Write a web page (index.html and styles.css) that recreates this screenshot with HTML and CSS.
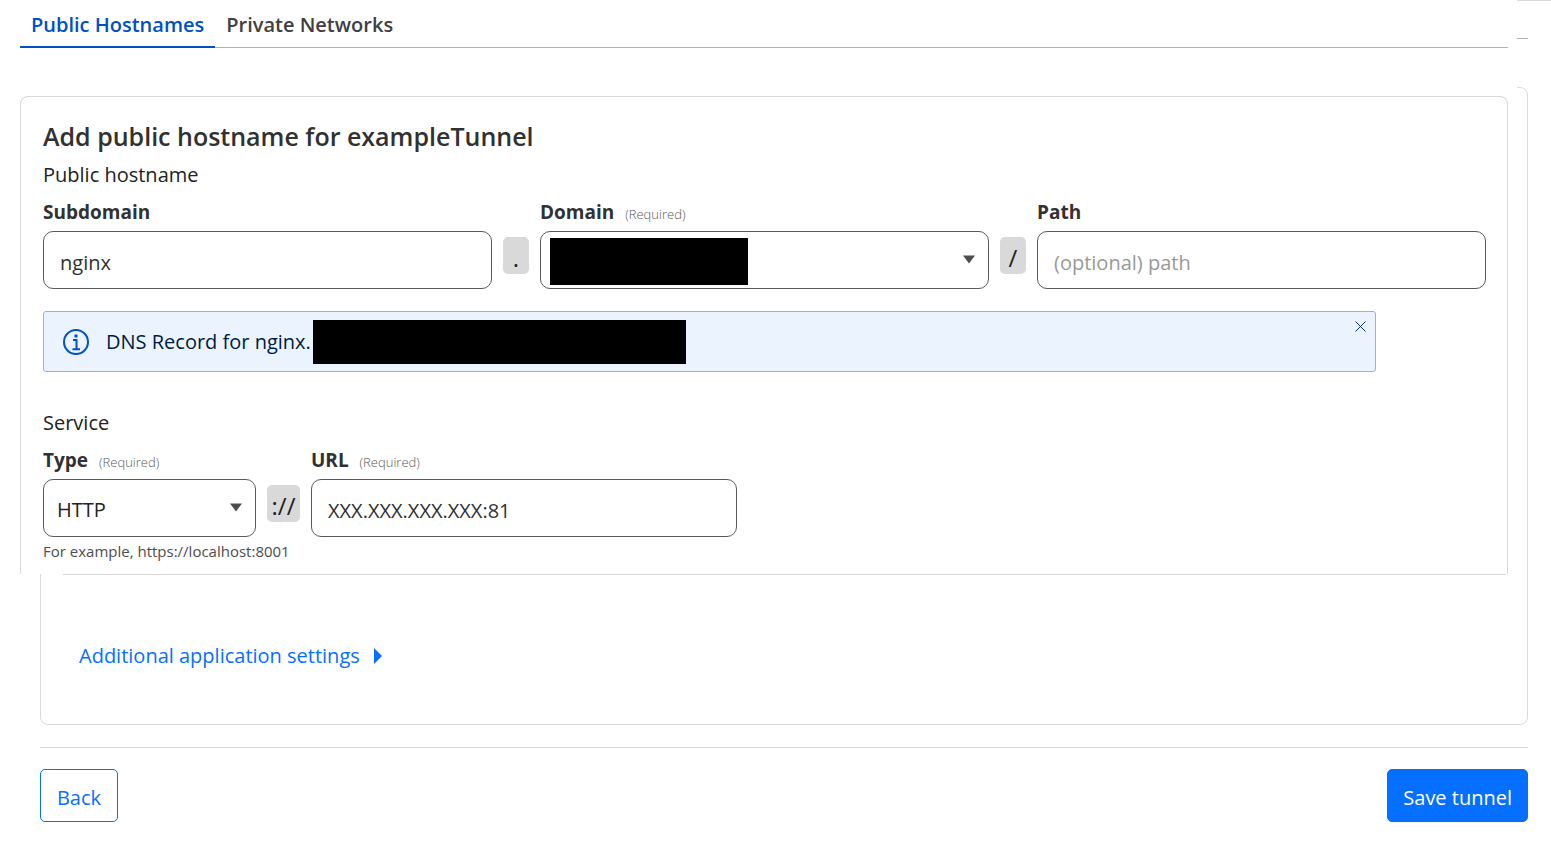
FILE: index.html
```html
<!DOCTYPE html>
<html lang="en">
<head>
<meta charset="utf-8">
<title>Add public hostname</title>
<link rel="stylesheet" href="styles.css">
</head>
<body>
<main class="page">
  <div class="stage">
    <div class="backdrop" aria-hidden="true">
      <div class="backdrop-tabs"></div>
      <div class="backdrop-card"></div>
    </div>

    <div class="sheet">
      <nav class="tabs">
        <a class="tab tab-active" href="#public">Public Hostnames</a>
        <a class="tab" href="#private">Private Networks</a>
      </nav>
      <form class="card" id="hostname-form">
        <h1 class="title">Add public hostname for exampleTunnel</h1>
        <p class="section-name">Public hostname</p>
        <div class="host-row">
          <div class="field">
            <label class="label" for="subdomain">Subdomain</label>
            <input class="control" id="subdomain" type="text" value="nginx">
          </div>
          <span class="separator">.</span>
          <div class="field">
            <label class="label" for="domain">Domain <span class="required">(Required)</span></label>
            <div class="select-wrap">
              <select class="control select" id="domain"><option></option></select>
              <span class="redacted redacted-domain"></span>
              <svg class="arrow" viewBox="0 0 12 9" aria-hidden="true"><path d="M0 0.500H12L6 8.500Z"/></svg>
            </div>
          </div>
          <span class="separator">/</span>
          <div class="field">
            <label class="label" for="path">Path</label>
            <input class="control" id="path" type="text" placeholder="(optional) path">
          </div>
        </div>

        <div class="notice" role="status">
          <svg class="info" viewBox="0 0 26 26" aria-hidden="true">
            <circle cx="13" cy="13" r="12"/>
            <path d="M10 11H13.500V20M9.500 20.200H17"/>
            <path class="info-dot" d="M11.500 5.500h3v3h-3z"/>
          </svg>
          <span class="notice-text">DNS Record for nginx.</span>
          <span class="redacted redacted-record"></span>
          <button class="close" type="button" aria-label="Dismiss">
            <svg viewBox="0 0 11 11" aria-hidden="true"><path d="M0.500 0.500L10.500 10.500M10.500 0.500L0.500 10.500"/></svg>
          </button>
        </div>

        <p class="section-name">Service</p>
        <div class="service-row">
          <div class="field">
            <label class="label" for="type">Type <span class="required">(Required)</span></label>
            <div class="select-wrap">
              <select class="control select" id="type"><option>HTTP</option></select>
              <svg class="arrow" viewBox="0 0 12 9" aria-hidden="true"><path d="M0 0.500H12L6 8.500Z"/></svg>
            </div>
          </div>
          <span class="separator">://</span>
          <div class="field">
            <label class="label" for="url">URL <span class="required">(Required)</span></label>
            <input class="control" id="url" type="text" value="XXX.XXX.XXX.XXX:81">
          </div>
        </div>
        <p class="hint">For example, https://localhost:8001</p>
      </form>
    </div>

    <section class="more">
      <button class="more-toggle" type="button">Additional application settings
        <svg class="caret" viewBox="0 0 8 16" aria-hidden="true"><path d="M0 0L8 8L0 16Z"/></svg>
      </button>
    </section>
  </div>

  <footer class="actions">
    <button class="button" type="button">Back</button>
    <button class="button button-primary" type="submit" form="hostname-form">Save tunnel</button>
  </footer>
</main>
</body>
</html>
```
FILE: styles.css
```css
* {
  box-sizing: border-box;
}

body {
  margin: 0;
  background: #fff;
  color: #222;
  font-family: "Open Sans", "Noto Sans", sans-serif;
  font-size: 20px;
  line-height: 28px;
}

h1,
p {
  margin: 0;
}

button,
input,
select {
  font: inherit;
}

/* The form sheet lies over the wizard's own card. */
.stage {
  display: grid;
  grid-template-columns: minmax(0, 1fr);
}

.backdrop {
  grid-area: 1 / 1 / 3 / 2;
  display: flex;
  flex-direction: column;
  border-top: 1px solid #d9d9d9;
}

.backdrop-tabs {
  height: 38px;
  margin: 0 23px 48px 40px;
  border-bottom: 1px solid #b3b3b3;
}

.backdrop-card {
  flex: 1;
  margin: 0 23px 0 40px;
  border: 1px solid #d9d9d9;
  border-radius: 8px;
}

.sheet {
  grid-area: 1 / 1;
  margin-right: 34px;
  padding: 0 9px 0 20px;
  background: #fff;
}

.tabs {
  display: flex;
  height: 48px;
  margin-bottom: 48px;
  border-bottom: 1px solid #b3b3b3;
}

.tab {
  height: 48px;
  padding: 11px 11px 7px;
  color: #404040;
  font-weight: 600;
  text-decoration: none;
}

.tab-active {
  border-bottom: 2px solid #0051c3;
  color: #0051c3;
}

.card {
  padding: 22px 21px 9px 22px;
  border: 1px solid #d9d9d9;
  border-bottom: 0;
  border-radius: 8px 8px 0 0;
}

.title {
  padding-bottom: 2px;
  color: #313131;
  font-size: 25px;
  font-weight: 600;
  line-height: 34px;
}

.section-name {
  padding: 6px 0;
}

.host-row,
.service-row {
  display: grid;
  gap: 11px;
}

.host-row {
  grid-template-columns: 1fr 26px 1fr 26px 1fr;
}

.service-row {
  grid-template-columns: 213px 33px 426px;
}

.field {
  display: flex;
  flex-direction: column;
  gap: 2px;
  min-width: 0;
}

.label {
  height: 34px;
  color: #313131;
  font-size: 19px;
  font-weight: 700;
  line-height: 34px;
}

.required {
  margin-left: 6px;
  color: #595959;
  font-size: 13px;
  font-weight: 300;
}

.control {
  width: 100%;
  height: 58px;
  padding: 4px 16px 0;
  border: 1px solid #595959;
  border-radius: 10px;
  background: #fff;
  color: #313131;
}

.control::placeholder {
  color: #999;
}

.select-wrap {
  position: relative;
  display: flex;
}

.select {
  padding-left: 13px;
  appearance: none;
  color: #222;
}

.arrow {
  position: absolute;
  top: 24px;
  right: 14px;
  width: 12px;
  height: 9px;
  fill: #4d4d4d;
  pointer-events: none;
}

.redacted {
  background: #000;
}

.redacted-domain {
  position: absolute;
  top: 7px;
  left: 10px;
  width: 198px;
  height: 47px;
}

.separator {
  align-self: start;
  height: 37px;
  margin-top: 42px;
  border-radius: 5px;
  background: #d9d9d9;
  font-size: 24px;
  line-height: 42px;
  text-align: center;
}

.notice {
  display: flex;
  align-items: center;
  height: 61px;
  margin: 22px 110px 31px 0;
  padding-left: 19px;
  border: 1px solid #82b6ff;
  border-radius: 3px;
  background: #ebf3ff;
  color: #001c43;
}

.info {
  width: 26px;
  height: 26px;
  margin-right: 17px;
  fill: none;
  stroke: #0051c3;
  stroke-width: 2;
}

.info-dot {
  fill: #0051c3;
  stroke: none;
}

.redacted-record {
  width: 373px;
  height: 44px;
  margin-left: 2px;
}

.close {
  display: flex;
  align-self: flex-start;
  margin: 4px 4px 0 auto;
  padding: 5px;
  border: 0;
  background: none;
}

.close svg {
  width: 11px;
  height: 11px;
  stroke: #003681;
}

.hint {
  color: #4d4d4d;
  font-size: 15px;
}

.more {
  grid-area: 2 / 1;
  margin: 0 45px 0 63px;
  padding: 67px 16px 55px;
  border-top: 1px solid #d9d9d9;
}

.more-toggle {
  display: flex;
  align-items: center;
  gap: 14px;
  padding: 0;
  border: 0;
  background: none;
  color: #056fff;
}

.caret {
  width: 8px;
  height: 16px;
  fill: currentColor;
}

.actions {
  display: flex;
  justify-content: space-between;
  margin: 22px 23px 0 40px;
  padding: 21px 0 32px;
  border-top: 1px solid #d9d9d9;
}

.button {
  min-width: 78px;
  height: 53px;
  padding: 4px 15px 0;
  border: 1px solid #056fff;
  border-radius: 5px;
  background: #fff;
  color: #056fff;
}

.button-primary {
  background: #056fff;
  color: #fff;
}
```
